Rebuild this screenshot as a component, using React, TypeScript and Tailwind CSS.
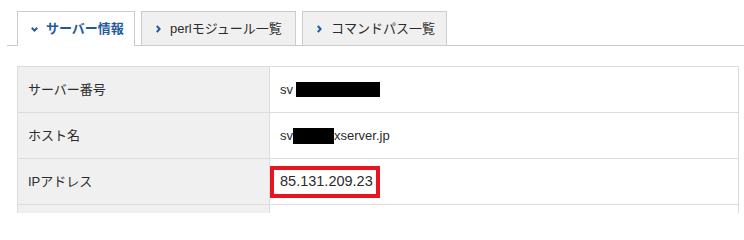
import React from "react";

const font = { fontFamily: '"Liberation Sans", "Noto Sans CJK JP", sans-serif' };

const ChevronDown = () => (
  <svg width="7" height="5" viewBox="0 0 7 5" className="shrink-0">
    <path d="M0.8 0.8 L3.5 3.6 L6.2 0.8" fill="none" stroke="#1f5b9c" strokeWidth="2" />
  </svg>
);

const ChevronRight = () => (
  <svg width="5" height="8" viewBox="0 0 5 8" className="shrink-0">
    <path d="M0.8 0.8 L3.6 4 L0.8 7.2" fill="none" stroke="#1f5b9c" strokeWidth="2" />
  </svg>
);

export default function App() {
  return (
    <div className="w-[744px] h-[213px] bg-white overflow-hidden text-[#2b2b2b]" style={font}>
      {/* Tabs */}
      <div className="mt-[11px] ml-[7px] pl-[10px] flex items-end gap-[6px] border-b border-[#cccccc]">
        <div className="-mb-px h-[35px] w-[118px] flex items-center pl-[13px] gap-[8px] bg-white border border-b-0 border-[#cccccc] text-[13px] font-bold text-[#1f5b9c]">
          <ChevronDown />
          <span>サーバー情報</span>
        </div>
        <div className="h-[34px] w-[155px] flex items-center pl-[14px] gap-[9px] bg-[#f0f0f0] border border-b-0 border-[#cccccc] text-[13px]">
          <ChevronRight />
          <span>perlモジュール一覧</span>
        </div>
        <div className="h-[34px] w-[145px] flex items-center pl-[14px] gap-[9px] bg-[#f0f0f0] border border-b-0 border-[#cccccc] text-[13px]">
          <ChevronRight />
          <span>コマンドパス一覧</span>
        </div>
      </div>

      {/* Table */}
      <div className="mt-[20px] ml-[17px] w-[722px] border border-b-0 border-[#dcdcdc] text-[13px]">
        <div className="flex h-[46px] border-b border-[#dcdcdc]">
          <div className="w-[252px] bg-[#f0f0f0] border-r border-[#dcdcdc] flex items-center pl-[10px]">サーバー番号</div>
          <div className="flex-1 flex items-center pl-[10px]">
            <span>sv</span>
            <span className="ml-[3px] w-[84px] h-[15px] bg-black" />
          </div>
        </div>
        <div className="flex h-[46px] border-b border-[#dcdcdc]">
          <div className="w-[252px] bg-[#f0f0f0] border-r border-[#dcdcdc] flex items-center pl-[10px]">ホスト名</div>
          <div className="flex-1 flex items-center pl-[10px]">
            <span>sv</span>
            <span className="w-[41px] h-[16px] bg-black" />
            <span>xserver.jp</span>
          </div>
        </div>
        <div className="flex h-[46px] border-b border-[#dcdcdc]">
          <div className="w-[252px] bg-[#f0f0f0] border-r border-[#dcdcdc] flex items-center pl-[10px]">IPアドレス</div>
          <div className="flex-1 flex items-center">
            <div className="w-[110px] h-[32px] border-[4px] border-[#e8141f] flex items-center pl-[6px] text-[14.5px]">
              85.131.209.23
            </div>
          </div>
        </div>
        <div className="flex h-[46px] border-b border-[#dcdcdc]">
          <div className="w-[252px] bg-[#f0f0f0] border-r border-[#dcdcdc]" />
          <div className="flex-1" />
        </div>
      </div>
    </div>
  );
}
